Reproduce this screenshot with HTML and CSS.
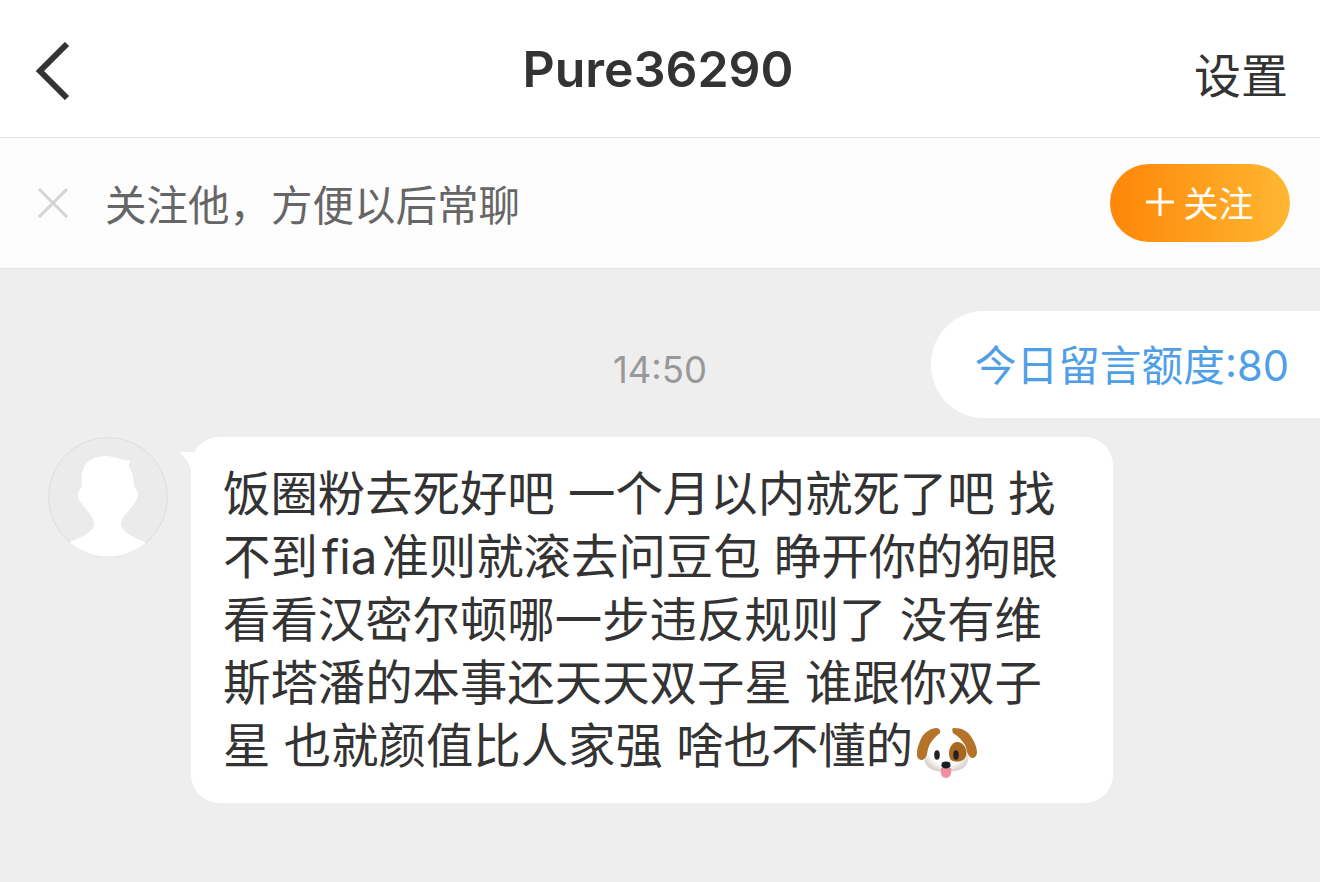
FILE: index.html
```html
<!DOCTYPE html>
<html lang="zh-CN">
<head>
  <meta charset="UTF-8" />
  <meta name="viewport" content="width=device-width, initial-scale=1.0" />
  <title>Pure36290</title>
  <link rel="stylesheet" href="styles.css">
</head>
<body>

<header class="topbar">
  <svg class="back-icon" viewBox="0 0 34 58"><path d="M31 2 L4 29 L31 56"/></svg>
  <h1 class="chat-title">Pure36290</h1>
  <a class="settings-link">设置</a>
</header>

<div class="follow-bar">
  <svg class="close-icon" viewBox="0 0 32 32"><path d="M2 2 L30 30 M30 2 L2 30"/></svg>
  <span class="follow-text">关注他，方便以后常聊</span>
  <button class="follow-btn">
    <svg class="plus-icon" viewBox="0 0 28 28"><path d="M0 14 H28 M14 0 V28"/></svg>
    <span>关注</span>
  </button>
</div>

<main class="chat">
  <div class="quota-row">
    <span class="time">14:50</span>
    <div class="quota">今日留言额度:80</div>
  </div>

  <div class="message">
    <svg class="avatar" viewBox="0 0 120 120">
      <defs><clipPath id="avatarClip"><circle cx="60" cy="60" r="59.5"/></clipPath></defs>
      <circle cx="60" cy="60" r="59.5" fill="#ebebeb" stroke="#dedede"/>
      <path clip-path="url(#avatarClip)" fill="#fff" d="M58 19 C66 19 74 23 83 24 C81 26 80 28 81 30 C85 36 86 42 86 50 C88 51 90 54 90 58 C89 63 86 67 84 70 C80 75 73 80 73 87 C73 94 84 100 97 105 L97 125 L22 125 L22 105 C35 100 46 94 46 87 C46 80 40 75 36 70 C34 67 30 63 30 58 C30 54 32 51 34 50 C33 42 34 36 35 32 C38 24 47 19 58 19 Z"/>
    </svg>
    <div class="bubble">
      饭圈粉去死好吧 一个月以内就死了吧 找<br>
      不到<span class="latin">fia</span>准则就滚去问豆包 睁开你的狗眼<br>
      看看汉密尔顿哪一步违反规则了 没有维<br>
      斯塔潘的本事还天天双子星 谁跟你双子<br>
      星 也就颜值比人家强 啥也不懂的<svg class="dog" viewBox="0 0 60 52">
        <defs>
          <radialGradient id="dogFace" cx="50%" cy="42%" r="58%">
            <stop offset="70%" stop-color="#fff"/>
            <stop offset="100%" stop-color="#d9d3cc"/>
          </radialGradient>
        </defs>
        <path fill="url(#dogFace)" d="M29 3 C18 3 12 14 9 24 C5 34 8 45 29 45 C50 45 54 34 50 24 C46 14 40 3 29 3 Z"/>
        <path fill="#a9671f" d="M39 15 C46 14 51 22 49 29 C47 35 39 36 34 33 C30 28 32 17 39 15 Z"/>
        <path fill="#b5732a" d="M19 1 C12 2 6 6 3 14 C1 19 -1 25 0 29 C1 33 5 34 7 32 C10 30 10 26 11 22 C13 15 18 10 23 6 C24 3 22 1 19 1 Z"/>
        <path fill="#b5732a" d="M37 1 C45 1 51 4 55 11 C58 16 60 21 60 26 C59 31 56 32 53 30 C50 27 50 23 48 18 C45 13 41 9 36 6 C35 3 35 1 37 1 Z"/>
        <ellipse cx="20" cy="28" rx="2.8" ry="4.8" fill="#222"/>
        <ellipse cx="39" cy="28" rx="2.8" ry="4.8" fill="#222"/>
        <path fill="#ef8fa0" d="M24 41 H34 C35 47 33 51 29 51 C25 51 23 47 24 41 Z"/>
        <ellipse cx="29" cy="38" rx="4.6" ry="3.4" fill="#1d1d1d"/>
      </svg>
    </div>
  </div>
</main>

</body>
</html>
```

FILE: styles.css
```css
body {
  font-family: Inter, "Noto Sans CJK SC", sans-serif;
  background-color: #eeeeee;
  margin: 0;
  padding: 0;
  color: #333;
  height: 882px;
  overflow: hidden;
}

.topbar {
  display: grid;
  grid-template-columns: 1fr auto 1fr;
  align-items: center;
  height: 137px;
  padding: 0 34px;
  background-color: #fff;
  border-bottom: 1px solid #e3e3e3;
}

.back-icon {
  width: 34px;
  height: 58px;
  margin: 4px 0 0 2px;
  fill: none;
  stroke: #333;
  stroke-width: 6;
}

.chat-title {
  margin: 0 4px 0 0;
  font-size: 50px;
  font-weight: 600;
  line-height: 1;
}

.settings-link {
  justify-self: end;
  margin: 14px -2px 0 0;
  font-size: 47px;
  line-height: 1;
}

.follow-bar {
  display: flex;
  align-items: center;
  height: 130px;
  padding: 0 30px 0 37px;
  background-color: #fdfdfd;
  border-bottom: 1px solid #e3e3e3;
}

.close-icon {
  width: 32px;
  height: 32px;
  fill: none;
  stroke: #d4d4d4;
  stroke-width: 3;
}

.follow-text {
  margin-left: 36px;
  font-size: 41.5px;
  color: #666;
}

.follow-btn {
  display: flex;
  align-items: center;
  justify-content: center;
  gap: 9px;
  margin-left: auto;
  width: 180px;
  height: 78px;
  padding: 0 0 3px;
  border: 0;
  border-radius: 39px;
  background: linear-gradient(90deg, #ff8608, #ffb733);
  color: #fff;
  font-family: inherit;
  font-size: 35px;
}

.plus-icon {
  width: 28px;
  height: 28px;
  fill: none;
  stroke: #fff;
  stroke-width: 3;
}

.chat {
  padding-top: 42px;
}

.quota-row {
  display: grid;
  grid-template-columns: 1fr auto 1fr;
  align-items: center;
}

.time {
  grid-column: 2;
  margin-top: 11px;
  font-size: 36.5px;
  color: #999;
}

.quota {
  grid-column: 3;
  justify-self: end;
  padding: 0 31px 0 44px;
  height: 107px;
  line-height: 111px;
  background-color: #fff;
  border-radius: 53px 0 0 53px;
  color: #4f9fe6;
  font-size: 41.7px;
  white-space: nowrap;
}

.message {
  display: flex;
  align-items: flex-start;
  margin-top: 19px;
  padding-left: 48px;
}

.avatar {
  flex: none;
  width: 120px;
  height: 120px;
}

.bubble {
  position: relative;
  box-sizing: border-box;
  width: 922px;
  height: 366px;
  margin-left: 23px;
  padding: 25px 20px 0 32px;
  background-color: #fff;
  border-radius: 28px;
  font-size: 47.4px;
  line-height: 63px;
  white-space: nowrap;
}

.bubble::before {
  content: "";
  position: absolute;
  left: -11px;
  top: 15px;
  width: 14px;
  height: 24px;
  background-color: #fff;
  clip-path: polygon(0 0, 100% 0, 100% 100%, 60% 45%, 25% 20%);
}

.latin {
  margin: 0 4px;
}

.dog {
  width: 60px;
  height: 52px;
  margin-left: 4px;
  vertical-align: -16px;
}
```
